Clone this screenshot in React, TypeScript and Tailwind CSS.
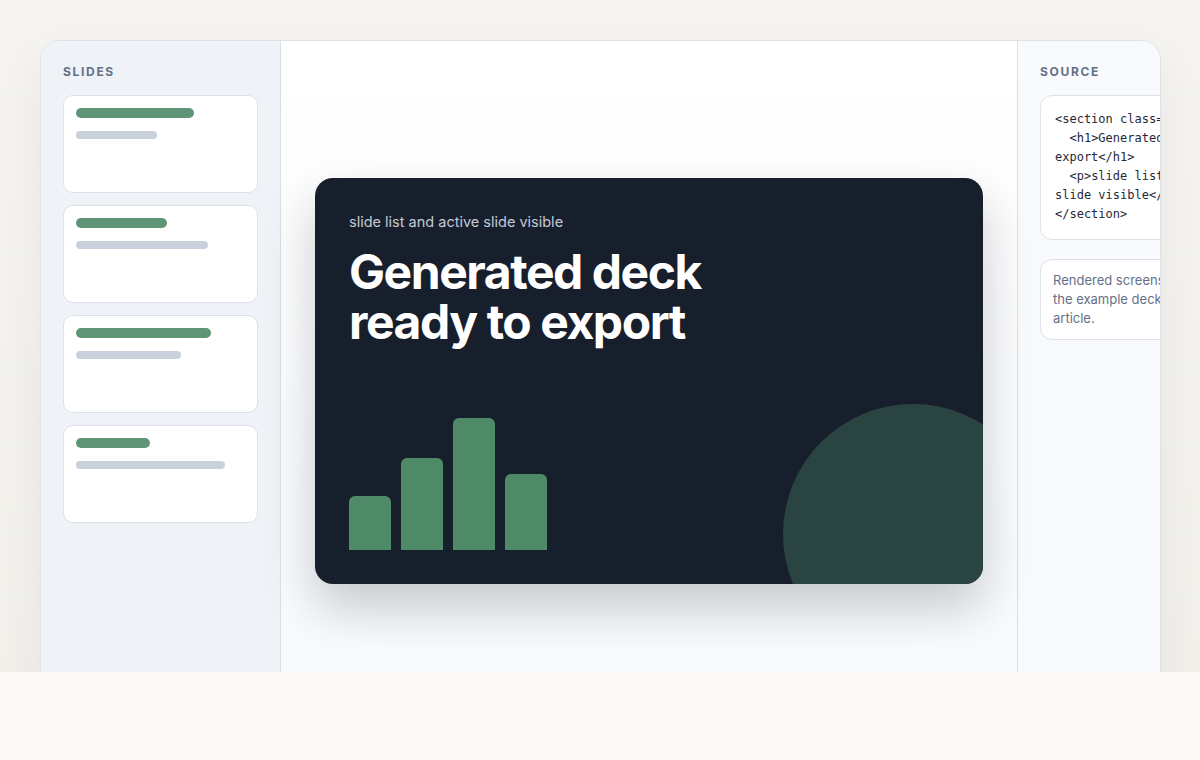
const slides = [
  { title: 118, line: 81 },
  { title: 91, line: 132 },
  { title: 135, line: 105 },
  { title: 74, line: 149 },
]

const bars = [54, 92, 132, 76]

const source = `<section class="slide">
  <h1>Generated deck ready to export</h1>
  <p>slide list and active slide visible</p>
</section>`

function SlideThumb({ title, line }: { title: number; line: number }) {
  return (
    <div className="h-[98px] rounded-[10px] border border-[#dce1ea] bg-white p-3">
      <div className="h-[10px] rounded-full bg-[#5f9576]" style={{ width: title }} />
      <div className="mt-[13px] h-2 rounded-full bg-[#c9d1dd]" style={{ width: line }} />
    </div>
  )
}

function PanelLabel({ children }: { children: string }) {
  return (
    <div className="mb-4 mt-px text-[12px] font-bold leading-4 tracking-[0.14em] text-[#64708a]">
      {children}
    </div>
  )
}

export default function App() {
  return (
    <div className="min-h-screen bg-[#faf9f5] font-['Inter','Noto_Sans',sans-serif]">
      <div className="h-[672px] overflow-hidden bg-gradient-to-b from-[#f5f4f0] to-[#f1f0eb] px-10 pt-10">
        <div className="flex h-[682px] w-[1121px] overflow-hidden rounded-[20px] border border-[#dde1ea] bg-white shadow-[0_20px_50px_rgba(30,35,45,0.06)]">
          {/* Slides rail */}
          <div className="w-[240px] shrink-0 border-r border-[#d9dfea] bg-[#eff2f7] p-[22px]">
            <PanelLabel>SLIDES</PanelLabel>
            <div className="-mt-px flex flex-col gap-3">
              {slides.map((s, i) => (
                <SlideThumb key={i} title={s.title} line={s.line} />
              ))}
            </div>
          </div>

          {/* Stage */}
          <div className="flex w-[736px] shrink-0 items-center justify-center bg-gradient-to-b from-white to-[#f8fafc]">
            <div className="relative flex h-[406px] w-[668px] flex-col overflow-hidden rounded-[18px] bg-[#181f2c] p-[34px] shadow-[0_24px_50px_rgba(15,23,42,0.22)]">
              <div className="absolute -bottom-[80px] -right-[60px] h-[260px] w-[260px] rounded-full bg-[#2a4541]" />
              <div className="relative text-[14.5px] leading-5 text-[#c3cad7]">slide list and active slide visible</div>
              <h1 className="relative mt-[15px] text-[48px] font-bold leading-[50px] tracking-[-0.03em] text-white">
                Generated deck
                <br />
                ready to export
              </h1>
              <div className="flex-1" />
              <div className="relative flex items-end gap-[10px]">
                {bars.map((h, i) => (
                  <div key={i} className="w-[42px] rounded-t-[6px] bg-[#4f8a68]" style={{ height: h }} />
                ))}
              </div>
            </div>
          </div>

          {/* Source */}
          <div className="w-[300px] shrink-0 border-l border-[#d9dfea] bg-[#f8fafc] p-[22px]">
            <PanelLabel>SOURCE</PanelLabel>
            <pre className="-mt-px w-[256px] whitespace-pre-wrap rounded-[12px] border border-[#dce1ea] bg-white px-[14px] pb-[15px] pt-[14px] font-['DejaVu_Sans_Mono',monospace] text-[12px] leading-[19px] text-[#1f2937]">
              {source}
            </pre>
            <div className="mt-[19px] w-[256px] rounded-[12px] border border-[#dce1ea] bg-white px-3 py-[11px] text-[13px] leading-[19px] text-[#64708a]">
              Rendered screenshot from
              <br />
              the example deck in the
              <br />
              article.
            </div>
          </div>
        </div>
      </div>
    </div>
  )
}
